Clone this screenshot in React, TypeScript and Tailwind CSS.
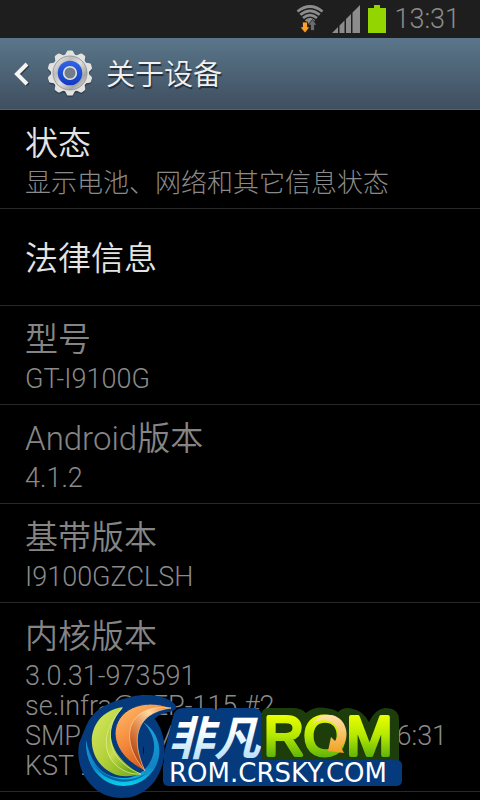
import { useId } from 'react'

type Pref = { title: string; lines?: string[]; cjk?: boolean; enabled?: boolean }

const PREFS: Pref[] = [
  { title: '状态', lines: ['显示电池、网络和其它信息状态'], cjk: true, enabled: true },
  { title: '法律信息', enabled: true },
  { title: '型号', lines: ['GT-I9100G'] },
  { title: 'Android版本', lines: ['4.1.2'] },
  { title: '基带版本', lines: ['I9100GZCLSH'] },
  { title: '内核版本', lines: ['3.0.31-973591', 'se.infra@SEP-115 #2', 'SMP PREEMPT Wed Jan 9 16:36:31', 'KST 2013'] },
]

function WifiIcon() {
  return (
    <svg width="28" height="28" viewBox="0 0 28 28" fill="none" aria-hidden="true">
      <g stroke="#8c8c8c" strokeWidth="2.7">
        <path d="M1.5 6.5Q14 -3.5 26.5 6.5" />
        <path d="M4.3 9.8Q14 2 23.7 9.8" />
        <path d="M7 13Q14 7.2 21 13" />
      </g>
      <path d="M8.8 15.3Q14 10.3 19.2 15.3L14 20Z" fill="#8c8c8c" />
      <path d="M6.5 17h5v5h2.5L9 28l-5-6h2.5Z" fill="#ffa026" stroke="#1e1e1e" strokeWidth="0.8" />
      <path d="M14.5 25.5v-5.5h-2.5l4.5-5.500 4.500 5.500h-2.500v5.500Z" fill="#6c6c6c" stroke="#1e1e1e" strokeWidth="0.8" />
    </svg>
  )
}

function SignalIcon() {
  return (
    <svg width="28" height="28" viewBox="0 0 28 28" fill="#8c8c8c" aria-hidden="true">
      <path d="M0 28L6 22V28ZM7.500 20.500L12.500 15.500V28H7.500ZM14 14L19 9V28H14ZM20.500 7.500L28 0V28H20.500Z" />
    </svg>
  )
}

function BatteryIcon() {
  return (
    <svg width="18" height="28" viewBox="0 0 18 28" fill="#93d500" aria-hidden="true">
      <path d="M6 0h6v3h6v25H0V3h6Z" />
    </svg>
  )
}

function GearIcon() {
  const id = useId()
  const teeth = Array.from({ length: 10 }, (_, i) => i * 36)
  const tooth = 'M17.500 6L19.800 1.600Q20.300 0.400 21.500 0.400H24.500Q25.700 0.400 26.200 1.600L28.500 6Z'
  return (
    <svg width="46" height="48" viewBox="0 0 46 48" aria-hidden="true">
      <defs>
        <linearGradient id={`${id}m`} x1="0" y1="0" x2="1" y2="1">
          <stop offset="0" stopColor="#f6f6f6" />
          <stop offset="0.3" stopColor="#bdbdbd" />
          <stop offset="0.5" stopColor="#dedede" />
          <stop offset="0.75" stopColor="#a5a5a5" />
          <stop offset="1" stopColor="#f2f2f2" />
        </linearGradient>
        <linearGradient id={`${id}b`} x1="0" y1="0" x2="0" y2="1">
          <stop offset="0" stopColor="#3464e4" />
          <stop offset="1" stopColor="#0f3bc4" />
        </linearGradient>
      </defs>
      <g fill="#26323d" opacity="0.6" transform="translate(0 1.5)">
        <circle cx="23" cy="23" r="19.500" />
        {teeth.map((a) => (
          <path key={a} d={tooth} transform={`rotate(${a} 23 23)`} />
        ))}
      </g>
      <g fill="#e2e2e0">
        <circle cx="23" cy="23" r="19" />
        {teeth.map((a) => (
          <path key={a} d={tooth} transform={`rotate(${a} 23 23)`} />
        ))}
      </g>
      <circle cx="23" cy="23" r="17" fill={`url(#${id}m)`} stroke="#8b8b8b" strokeWidth="0.8" />
      <circle cx="23" cy="23" r="12.300" fill={`url(#${id}b)`} />
      <circle cx="23" cy="23" r="6.300" fill="#717d87" stroke="#e2e4e8" strokeWidth="1.600" />
    </svg>
  )
}

function RomLogo() {
  return (
    <svg width="330" height="110" viewBox="74 690 330 110" role="img" aria-label="非凡ROM ROM.CRSKY.COM">
      <defs>
        <linearGradient id="lime" x1="0" y1="0" x2="1" y2="1">
          <stop offset="0" stopColor="#d9ea62" />
          <stop offset="0.5" stopColor="#b3d13b" />
          <stop offset="1" stopColor="#6fa51c" />
        </linearGradient>
        <linearGradient id="limeLight" x1="0" y1="0" x2="0.6" y2="1">
          <stop offset="0" stopColor="#9fc52e" />
          <stop offset="0.6" stopColor="#c6dc4c" />
          <stop offset="1" stopColor="#6ba31a" />
        </linearGradient>
        <linearGradient id="orange" x1="0" y1="0" x2="0.6" y2="1">
          <stop offset="0" stopColor="#ffc070" />
          <stop offset="0.5" stopColor="#f58b3c" />
          <stop offset="1" stopColor="#c9531a" />
        </linearGradient>
        <linearGradient id="peach" x1="1" y1="0" x2="0.3" y2="1">
          <stop offset="0" stopColor="#f2761f" />
          <stop offset="0.3" stopColor="#ffd9a0" />
          <stop offset="0.6" stopColor="#e58a4a" />
          <stop offset="1" stopColor="#a93808" />
        </linearGradient>
        <linearGradient id="cyan" x1="0" y1="0" x2="0" y2="1">
          <stop offset="0" stopColor="#16a6e0" />
          <stop offset="0.7" stopColor="#1083c4" />
          <stop offset="1" stopColor="#06d3ea" />
        </linearGradient>
        <linearGradient id="green" gradientUnits="userSpaceOnUse" x1="0" y1="715" x2="0" y2="757">
          <stop offset="0" stopColor="#eaff00" />
          <stop offset="0.5" stopColor="#b4e800" />
          <stop offset="1" stopColor="#5fb40c" />
        </linearGradient>
        <linearGradient id="ice" gradientUnits="userSpaceOnUse" x1="0" y1="714" x2="0" y2="760">
          <stop offset="0.3" stopColor="#ffffff" />
          <stop offset="1" stopColor="#b5e0fa" />
        </linearGradient>
        <linearGradient id="gold" x1="0" y1="0" x2="0" y2="1">
          <stop offset="0" stopColor="#ffe3ac" />
          <stop offset="1" stopColor="#f0a01e" />
        </linearGradient>
      </defs>

      {/* navy plate behind the swirl and the words */}
      <g fill="#053a7c" stroke="#053a7c" strokeLinejoin="round">
        <path
          fillRule="evenodd"
          strokeWidth="8"
          d="M90 727C98 708 120 704 124 703C140 697 162 697 172 707C160 709 152 714 150 719C172 745 158 794 122 794C94 794 79 768 83 744ZM143 732C150 745 149 760 144 767C138 756 138 743 143 732Z"
        />
        <path strokeWidth="6" d="M167 754L176 717Q177 711 183 711H212Q216 715 220 711H253Q259 711 259 717L264 764H167Z" />
      </g>

      <path d="M86 740C84 775 115 796 142 781C166 766 164 735 143 722C166 745 150 776 126 778C104 779 91 765 86 740Z" fill="url(#cyan)" />
      <path d="M94 764C104 784 133 788 149 771C134 784 108 782 94 764Z" fill="#0b62ac" />
      <path d="M123 707C84 713 83 759 112 773C121 778 133 776 141 774C113 760 99 731 123 707Z" fill="url(#lime)" />
      <path d="M122 708C101 731 109 762 141 774C118 776 87 749 122 708Z" fill="url(#limeLight)" stroke="#e4f09a" strokeWidth="0.7" />
      <path d="M171 708C143 697 115 710 115 734C116 752 131 764 145 771C128 741 132 711 171 708Z" fill="url(#orange)" stroke="#053a7c" strokeWidth="1" />
      <path d="M171 708C128 703 117 738 145 771C131 741 134 713 171 708Z" fill="url(#peach)" stroke="#ffe0b0" strokeWidth="0.6" />

      <text x="168" y="755" fontSize="46" fontWeight="700" fontStyle="italic" fontFamily="Noto Sans CJK SC, sans-serif" fill="url(#ice)">非凡</text>

      <path
        d="M268 708H293Q301 708 306 713Q315 706 326 708Q334 709 338 712Q344 706 353 709Q363 711 369 722Q375 709 385 708Q399 708 399 720V762H261V718Q261 708 268 708Z"
        fill="#1d3d0b"
      />
      <text
        x="264"
        y="755"
        fontSize="55"
        fontWeight="400"
        fontFamily="Liberation Sans, sans-serif"
        fill="url(#green)"
        stroke="url(#green)"
        strokeWidth="4"
        strokeLinejoin="round"
      >
        ROM
      </text>
      <path d="M312 725C318 711 338 712 344 724C349 734 346 743 341 747L344 753L328 751L331 737L335 741C340 734 338 725 331 722C324 719 316 720 312 725Z" fill="url(#gold)" />

      <rect x="163" y="760" width="239" height="26" rx="5" fill="#053a7c" />
      <text x="169" y="782" fontSize="26" fontWeight="400" fontFamily="DejaVu Sans, sans-serif" fill="#ffffff">ROM.CRSKY.COM</text>
    </svg>
  )
}

function PrefRow({ title, lines, cjk, enabled }: Pref) {
  return (
    <li
      className={`flex flex-col gap-1 border-b border-[#282828] px-[25px] pt-[14px] pb-[10px] ${lines ? '' : 'min-h-[97px] justify-center'} ${enabled ? 'text-[#e4e4e4]' : 'text-[#858585]'}`}
    >
      <h2 className="text-[33px] leading-10 font-[350]">{title}</h2>
      {lines && (
        <div className={`leading-[30px] text-[#8a8a8a] ${cjk ? 'text-[26px]' : 'text-[27px]'}`}>
          {lines.map((line) => (
            <p key={line} className="whitespace-nowrap">{line}</p>
          ))}
        </div>
      )}
    </li>
  )
}

export default function App() {
  return (
    <div className="relative min-h-screen overflow-hidden bg-black font-[Roboto,'Noto_Sans_CJK_SC',sans-serif] font-light">
      <div className="flex h-[38px] items-center justify-end gap-2 bg-[#1e1e1e] pr-5 text-[#8c8c8c]">
        <WifiIcon />
        <SignalIcon />
        <BatteryIcon />
        <time className="text-[27px] leading-8">13:31</time>
      </div>

      <header className="flex h-[72px] items-center border-b border-[#4a6578] bg-linear-to-b from-[#5b768b] to-[#3e4f60] pl-[13px]">
        <button type="button" aria-label="返回" className="flex items-center gap-4">
          <svg width="18" height="24" viewBox="0 0 18 24" fill="none" aria-hidden="true">
            <path d="M15 3L5 13L15 23" stroke="#2a3642" strokeWidth="4" />
            <path d="M14 2L4 12L14 22" stroke="#f4f4f4" strokeWidth="4" />
          </svg>
          <GearIcon />
        </button>
        <h1 className="pt-[2px] pl-[13px] text-[29px] leading-10 font-[350] text-[#f0f0f0] [text-shadow:1px_2px_1px_#222c36]">关于设备</h1>
      </header>

      <ul>
        {PREFS.map((p) => (
          <PrefRow key={p.title} {...p} />
        ))}
      </ul>

      {/* site badge floats over the list */}
      <div className="pointer-events-none absolute top-[690px] left-[74px]">
        <RomLogo />
      </div>
    </div>
  )
}
